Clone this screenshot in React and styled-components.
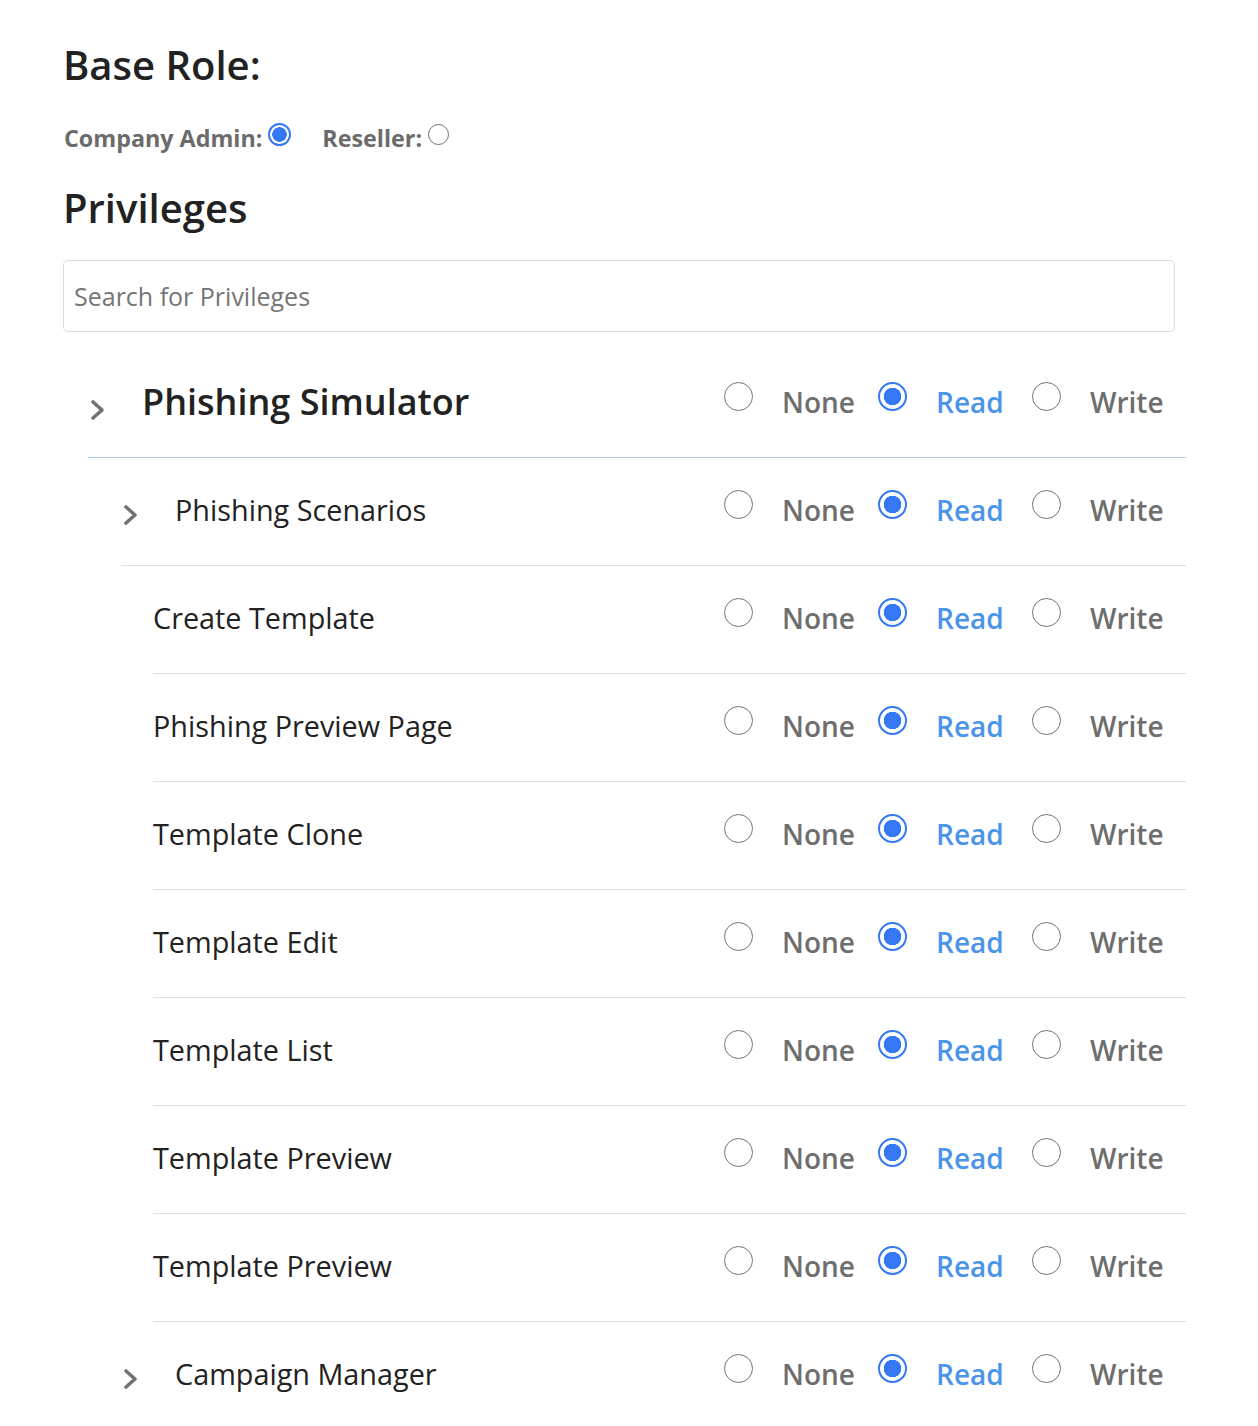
import React from 'react';
import styled, { createGlobalStyle } from 'styled-components';

const GlobalStyle = createGlobalStyle`
body {
  margin: 0;
  background: #ffffff;
  font-family: "Open Sans", "Liberation Sans", sans-serif;
  color: #222222;
}
`;

const Page = styled.div`
padding: 39px 0 0 64px;
width: 1122px;
`;

const Heading = styled.h2`
margin: 0;
font-size: 40px;
font-weight: 600;
line-height: 52px;
color: #222222;
margin-left: -1px;
`;

const BaseRoleRow = styled.div`
display: flex;
align-items: center;
margin: 32px 0 29px 0;
height: 30px;
`;

const RoleOption = styled.label`
display: flex;
align-items: center;
margin-right: 31px;
font-size: 23.3px;
font-weight: 700;
color: #6b6b6b;
`;

const SmallRadio = styled.span`
box-sizing: border-box;
display: inline-block;
width: ${props => props.checked ? '23px' : '21px'};
height: ${props => props.checked ? '23px' : '21px'};
margin: 0 0 8px 6px;
border-radius: 50%;
border: ${props => props.checked ? '2px solid #3478f6' : '1.5px solid #6f6f6f'};
background: ${props => props.checked ? 'radial-gradient(circle, #3478f6 0 7px, #ffffff 7.5px)' : '#ffffff'};
`;

const SearchInput = styled.input`
box-sizing: border-box;
display: block;
width: 1112px;
height: 72px;
margin: 26px 0 18px -1px;
padding: 0 10px;
border: 1px solid #dcdcdc;
border-radius: 5px;
font-family: "Open Sans", "Liberation Sans", sans-serif;
font-size: 25px;
color: #222222;
outline: none;
&::placeholder {
  color: #757575;
}
`;

const Row = styled.div`
box-sizing: border-box;
display: flex;
align-items: center;
height: 108px;
padding-bottom: 4px;
margin-left: ${props => props.indent}px;
border-bottom: 1px solid ${props => props.top ? '#aecdf4' : '#dedede'};
`;

const ChevronBox = styled.span`
display: flex;
align-items: center;
justify-content: flex-start;
width: 54px;
padding-left: 1px;
padding-top: ${props => props.top ? '16px' : '10px'};
box-sizing: border-box;
`;

const Name = styled.span`
font-size: ${props => props.top ? '36px' : '28.8px'};
font-weight: ${props => props.top ? 600 : 400};
color: #222222;
`;

const Options = styled.div`
display: flex;
margin-left: auto;
width: 462px;
`;

const Option = styled.label`
display: flex;
align-items: center;
width: 154px;
`;

const Radio = styled.span`
box-sizing: border-box;
display: inline-block;
width: 29px;
height: 29px;
margin: 0 29px 10px 0;
border-radius: 50%;
border: ${props => props.checked ? '2px solid #3478f6' : '1.5px solid #737373'};
background: ${props => props.checked ? 'radial-gradient(circle, #3478f6 0 8.5px, #ffffff 9px)' : '#ffffff'};
`;

const OptionLabel = styled.span`
font-size: 28px;
font-weight: 600;
color: ${props => props.checked ? '#4a94ea' : '#6e6e6e'};
`;

const Chevron = () => (
  <svg width="18" height="22" viewBox="0 0 18 22">
    <polyline points="4,3 13,11 4,19" fill="none" stroke="#727272" strokeWidth="3.6" strokeLinecap="round" strokeLinejoin="round" />
  </svg>
);

const Access = ({ value }) => (
  <Options>
    {['None', 'Read', 'Write'].map(level => (
      <Option key={level}>
        <Radio checked={value === level} />
        <OptionLabel checked={value === level}>{level}</OptionLabel>
      </Option>
    ))}
  </Options>
);

const rows = [
  { name: 'Phishing Simulator', level: 0 },
  { name: 'Phishing Scenarios', level: 1 },
  { name: 'Create Template', level: 2 },
  { name: 'Phishing Preview Page', level: 2 },
  { name: 'Template Clone', level: 2 },
  { name: 'Template Edit', level: 2 },
  { name: 'Template List', level: 2 },
  { name: 'Template Preview', level: 2 },
  { name: 'Template Preview', level: 2 },
  { name: 'Campaign Manager', level: 1 },
];

const indents = [24, 57, 89];

export default function App() {
  return (
    <>
      <GlobalStyle />
      <Page>
        <Heading>Base Role:</Heading>
        <BaseRoleRow>
          <RoleOption>Company Admin:<SmallRadio checked /></RoleOption>
          <RoleOption>Reseller:<SmallRadio /></RoleOption>
        </BaseRoleRow>
        <Heading>Privileges</Heading>
        <SearchInput placeholder="Search for Privileges" />
        {rows.map((row, i) => (
          <Row key={i} indent={indents[row.level]} top={row.level === 0}>
            {row.level < 2 && (
              <ChevronBox top={row.level === 0}><Chevron /></ChevronBox>
            )}
            <Name top={row.level === 0}>{row.name}</Name>
            <Access value="Read" />
          </Row>
        ))}
      </Page>
    </>
  );
}
